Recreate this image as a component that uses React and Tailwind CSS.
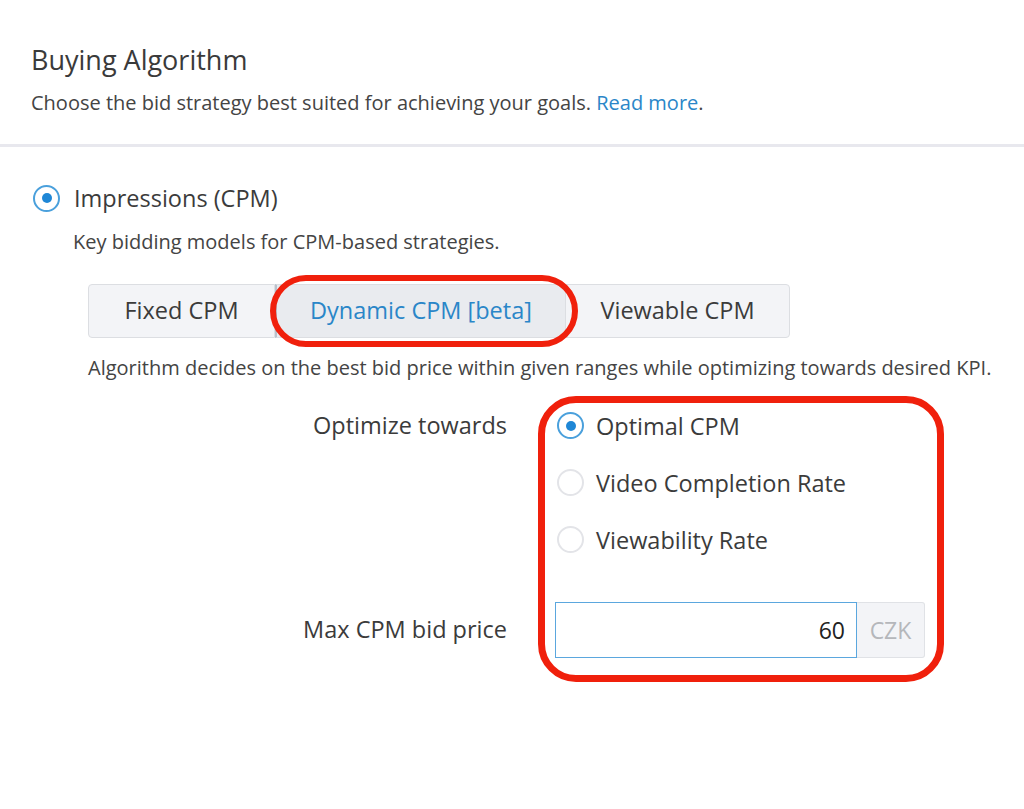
import React from 'react';

const font = { fontFamily: '"Open Sans", Lato, sans-serif' };

// radio dot, checked or empty
const Radio = ({ checked }) => (
    <span
        className={`flex items-center justify-center w-[27px] h-[27px] rounded-full border-2 bg-white ${checked ? 'border-[#4aa0dc]' : 'border-[#e3e4e8]'}`}
    >
        {checked && <span className="w-[10px] h-[10px] rounded-full bg-[#1f87d6]" />}
    </span>
);

const OptionRow = ({ checked, label }) => (
    <div className="flex items-center gap-[12px] h-[57px]">
        <Radio checked={checked} />
        <span className="text-[23.5px] leading-[30px] text-[#3b3b3b]">{label}</span>
    </div>
);

export default function App() {
    return (
        <div className="w-[1024px] h-[809px] bg-white overflow-hidden" style={font}>
            {/* Header */}
            <div className="px-[31px] pt-[42px] pb-[28px] border-b-[3px] border-[#e8e8ee]">
                <h1 className="text-[27px] leading-[36px] text-[#3a3a3a]">Buying Algorithm</h1>
                <p className="mt-[12px] text-[20px] leading-[26px] text-[#444]">
                    Choose the bid strategy best suited for achieving your goals.{' '}
                    <span className="text-[#2a86c8]">Read more</span>.
                </p>
            </div>

            {/* Impressions section */}
            <div className="pl-[33px] pt-[36px]">
                <div className="flex items-center gap-[14px] h-[30px]">
                    <Radio checked />
                    <span className="text-[23.5px] leading-[30px] text-[#3b3b3b]">Impressions (CPM)</span>
                </div>
                <p className="ml-[40px] mt-[16px] text-[20px] leading-[26px] text-[#444]">
                    Key bidding models for CPM-based strategies.
                </p>

                <div className="ml-[55px] mt-[29px] relative flex w-[702px] h-[54px] text-[23.5px]">
                    <div className="flex items-center justify-center w-[187px] bg-[#f3f4f7] border border-[#dcdee2] rounded-l-[4px] text-[#3b3b3b]">
                        Fixed CPM
                    </div>
                    <div className="flex items-center justify-center w-[290px] bg-[#e9ebef] border-y border-l-2 border-[#dcdee2] border-l-[#b9c2cc] text-[#2a86c8]">
                        Dynamic CPM [beta]
                    </div>
                    <div className="flex items-center justify-center flex-1 bg-[#f3f4f7] border border-[#dcdee2] rounded-r-[4px] text-[#3b3b3b]">
                        Viewable CPM
                    </div>
                    {/* red annotation round the active tab */}
                    <div className="absolute left-[182px] top-[-9px] w-[308px] h-[72px] rounded-full border-[6px] border-[#f0200c]" />
                </div>

                <p className="ml-[55px] mt-[17px] text-[20px] leading-[26px] text-[#444] whitespace-nowrap">
                    Algorithm decides on the best bid price within given ranges while optimizing towards desired KPI.
                </p>

                {/* Form */}
                <div className="mt-[16px] grid grid-cols-[474px_1fr] gap-x-[48px]">
                    <div className="flex flex-col text-[23.5px] text-[#3b3b3b]">
                        <div className="h-[57px] flex items-center justify-end">Optimize towards</div>
                        <div className="h-[57px]" />
                        <div className="h-[57px]" />
                        <div className="h-[90px] flex items-center justify-end pt-[34px]">Max CPM bid price</div>
                    </div>
                    <div className="relative w-[372px]">
                        <div className="pl-[2px]">
                            <OptionRow checked label="Optimal CPM" />
                            <OptionRow label="Video Completion Rate" />
                            <OptionRow label="Viewability Rate" />
                        </div>
                        <div className="mt-[34px] flex h-[56px]">
                            <div className="flex items-center justify-end w-[302px] border-[1.5px] border-[#5ba7de] pr-[11px] text-[23px] text-[#222]">
                                60
                            </div>
                            <div className="flex items-center justify-center w-[68px] bg-[#f3f4f7] border border-l-0 border-[#e0e2e6] rounded-r-[3px] text-[23px] text-[#b5b7bb]">
                                CZK
                            </div>
                        </div>
                        {/* red annotation round the controls */}
                        <div className="absolute left-[-17px] top-[-1px] w-[406px] h-[286px] rounded-[38px] border-[7px] border-[#f0200c]" />
                    </div>
                </div>
            </div>
        </div>
    );
}
